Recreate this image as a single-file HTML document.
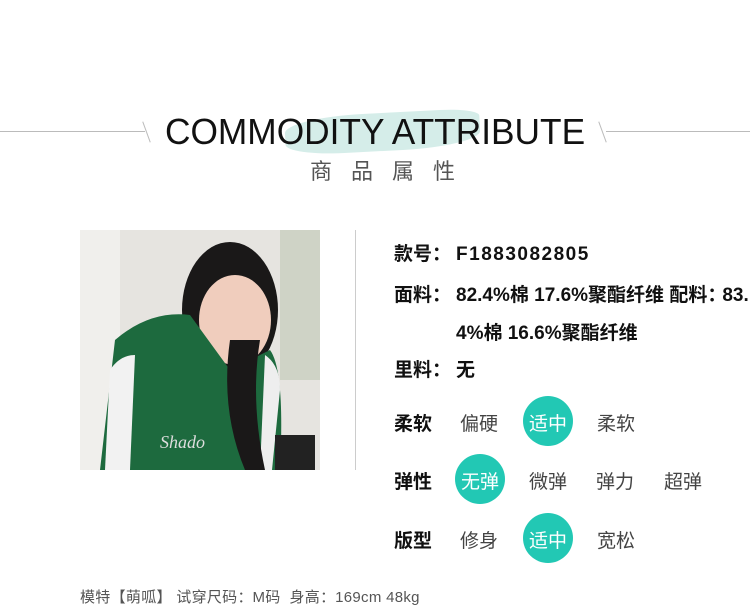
<!DOCTYPE html>
<html><head><meta charset="utf-8"><style>
*{margin:0;padding:0;box-sizing:border-box}
body{width:750px;height:605px;background:#fff;position:relative;overflow:hidden;font-family:"Liberation Sans","Noto Sans CJK SC",sans-serif}
.a{position:absolute;white-space:nowrap}
.b{font-weight:bold;color:#111;font-size:19px}
.o{font-size:19px;color:#444}
.k{display:inline-block;width:24px}
.c{position:absolute;width:50px;height:50px;border-radius:50%;background:#22c8b4;color:#fff;font-size:19px;display:flex;align-items:center;justify-content:center;padding-top:2px}
</style></head><body>
<div class="a" style="left:0;top:131px;width:145px;height:1px;background:#bbb"></div>
<div class="a" style="left:146px;top:121px;width:1px;height:22px;background:#bbb;transform:rotate(-20deg)"></div>
<div class="a" style="left:602px;top:121px;width:1px;height:22px;background:#bbb;transform:rotate(-20deg)"></div>
<div class="a" style="left:606px;top:131px;width:144px;height:1px;background:#bbb"></div>
<div class="a" style="left:285px;top:113px;width:195px;height:38px;background:#d5ede9;border-radius:40% 20% 40% 30%;transform:rotate(-3deg)"></div>
<div class="a" style="left:165px;top:110px;font-size:36px;color:#111;line-height:44px;transform:scaleX(0.98);transform-origin:0 0">COMMODITY ATTRIBUTE</div>
<div class="a" style="left:310px;top:158px;font-size:22px;color:#555;letter-spacing:19px;line-height:28px">商品属性</div>

<svg class="a" style="left:80px;top:230px" width="240" height="240" viewBox="0 0 240 240">
<rect width="240" height="240" fill="#e6e4e0"/>
<rect x="0" y="0" width="40" height="240" fill="#f0efec"/>
<rect x="200" y="0" width="40" height="150" fill="#cfd3c6"/>
<ellipse cx="150" cy="80" rx="48" ry="68" fill="#1a1818"/>
<ellipse cx="155" cy="90" rx="36" ry="45" fill="#f0cdbd"/>
<path d="M20 240 L35 110 Q70 80 110 85 L150 140 L190 120 Q205 140 200 240 Z" fill="#1d6a3e"/>
<path d="M25 240 L30 140 Q40 125 55 125 L50 240Z" fill="#f2f2f2"/>
<path d="M185 125 Q200 135 200 160 L192 240 L180 240Z" fill="#eee"/>
<path d="M150 110 Q140 180 165 240 L185 240 Q170 170 180 110Z" fill="#1a1818"/>
<rect x="195" y="205" width="40" height="35" fill="#222"/>
<text x="80" y="218" font-size="18" fill="#ddd" font-style="italic" font-family="Liberation Serif">Shado</text>
</svg>
<div class="a" style="left:355px;top:230px;width:1px;height:240px;background:#ccc"></div>

<div class="a b" style="left:394px;top:239px">款号<span class="k">：</span><span style="letter-spacing:1.5px">F1883082805</span></div>
<div class="a b" style="left:394px;top:280px">面料<span class="k">：</span>82.4%棉 17.6%聚酯纤维 配料<span style="display:inline-block;width:15px">：</span>83.</div>
<div class="a b" style="left:456px;top:318px">4%棉 16.6%聚酯纤维</div>
<div class="a b" style="left:394px;top:355px">里料<span class="k">：</span>无</div>

<div class="a b" style="left:394px;top:409px">柔软</div>
<div class="a o" style="left:460px;top:409px">偏硬</div>
<div class="c" style="left:523px;top:396px">适中</div>
<div class="a o" style="left:597px;top:409px">柔软</div>

<div class="a b" style="left:394px;top:467px">弹性</div>
<div class="c" style="left:455px;top:454px">无弹</div>
<div class="a o" style="left:529px;top:467px">微弹</div>
<div class="a o" style="left:596px;top:467px">弹力</div>
<div class="a o" style="left:664px;top:467px">超弹</div>

<div class="a b" style="left:394px;top:526px">版型</div>
<div class="a o" style="left:460px;top:526px">修身</div>
<div class="c" style="left:523px;top:513px">适中</div>
<div class="a o" style="left:597px;top:526px">宽松</div>

<div class="a" style="left:80px;top:586px;font-size:15px;color:#555;letter-spacing:0.3px">模特【萌呱】 试穿尺码<span style="display:inline-block;width:15px">：</span>M码&nbsp; 身高<span style="display:inline-block;width:15px">：</span>169cm 48kg</div>
</body></html>
